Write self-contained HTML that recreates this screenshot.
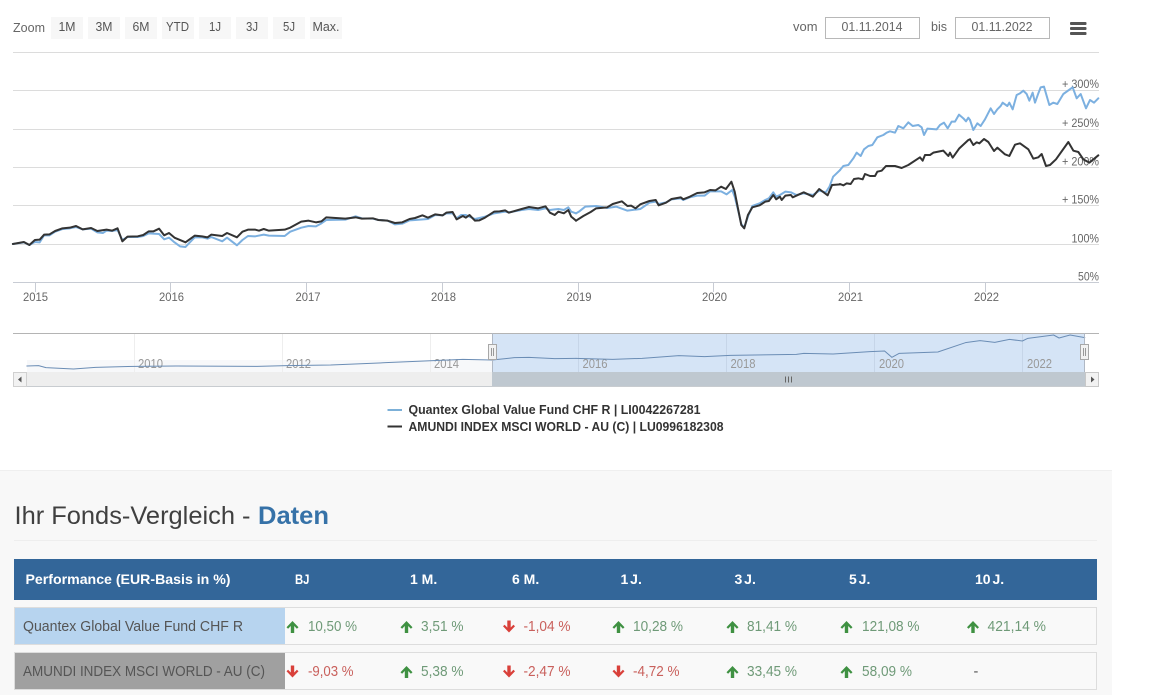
<!DOCTYPE html>
<html lang="de"><head><meta charset="utf-8"><title>Fonds-Vergleich</title>
<style>
html,body{margin:0;padding:0;background:#fff;width:1152px;height:695px;overflow:hidden}
svg{display:block;position:absolute;left:0;top:0}
text{font-family:"Liberation Sans",sans-serif}
.btn{font-size:12.5px;fill:#555}
.ax{font-size:11.5px;fill:#666}
.nv{font-size:12.5px;fill:#999}
.hd{font-size:14px;font-weight:bold;fill:#fff}
.hs{font-size:14px;font-weight:bold;fill:#fff;word-spacing:-2px}
.g{font-size:14.5px;fill:#6f9a78}
.r{font-size:14.5px;fill:#c9605c}
.n{font-size:14.5px;fill:#555}
.l{fill:none;stroke-linejoin:round;stroke-linecap:round;vector-effect:non-scaling-stroke}
</style></head><body>
<svg width="1152" height="695" viewBox="0 0 1152 695" xmlns="http://www.w3.org/2000/svg">
<defs>
<path id="up" d="M6 0L12 6.2 10.4 7.7 7.7 5V12H4.3V5L1.6 7.7 0 6.2Z" fill="#3f9142"/>
<path id="dn" d="M6 12L12 5.8 10.400 4.300 7.700 7V0H4.300V7L1.600 4.300 0 5.800Z" fill="#d9403a"/>
</defs>
<rect width="1152" height="695" fill="#fff"/>

<!-- toolbar -->
<text x="13" y="32" class="btn" textLength="32" lengthAdjust="spacingAndGlyphs" style="fill:#666">Zoom</text>
<g fill="#f7f7f7">
<rect x="51" y="17" width="32" height="22"/><rect x="88" y="17" width="32" height="22"/><rect x="125" y="17" width="32" height="22"/><rect x="162" y="17" width="32" height="22"/><rect x="199" y="17" width="32" height="22"/><rect x="236" y="17" width="32" height="22"/><rect x="273" y="17" width="32" height="22"/><rect x="310" y="17" width="32" height="22"/>
</g>
<text x="58.500" y="31" class="btn" textLength="17" lengthAdjust="spacingAndGlyphs">1M</text>
<text x="95.500" y="31" class="btn" textLength="17" lengthAdjust="spacingAndGlyphs">3M</text>
<text x="132.500" y="31" class="btn" textLength="17" lengthAdjust="spacingAndGlyphs">6M</text>
<text x="166" y="31" class="btn" textLength="23" lengthAdjust="spacingAndGlyphs">YTD</text>
<text x="209" y="31" class="btn" textLength="12" lengthAdjust="spacingAndGlyphs">1J</text>
<text x="246" y="31" class="btn" textLength="12" lengthAdjust="spacingAndGlyphs">3J</text>
<text x="283" y="31" class="btn" textLength="12" lengthAdjust="spacingAndGlyphs">5J</text>
<text x="312.500" y="31" class="btn" textLength="27" lengthAdjust="spacingAndGlyphs">Max.</text>

<text x="793" y="31" class="btn" textLength="24.500" lengthAdjust="spacingAndGlyphs" style="fill:#666">vom</text>
<rect x="825.500" y="17.500" width="94" height="21" fill="#fff" stroke="#b8b8b8"/>
<text x="841.500" y="31" class="btn" textLength="61" lengthAdjust="spacingAndGlyphs" style="fill:#666">01.11.2014</text>
<text x="931" y="31" class="btn" textLength="16" lengthAdjust="spacingAndGlyphs" style="fill:#666">bis</text>
<rect x="955.500" y="17.500" width="94" height="21" fill="#fff" stroke="#b8b8b8"/>
<text x="971.500" y="31" class="btn" textLength="61" lengthAdjust="spacingAndGlyphs" style="fill:#666">01.11.2022</text>
<g fill="#555"><rect x="1070" y="22" width="16.500" height="3" rx="1"/><rect x="1070" y="27" width="16.500" height="3" rx="1"/><rect x="1070" y="32" width="16.500" height="3" rx="1"/></g>

<!-- grid -->
<path d="M13 52.500H1099M13 90.500H1099M13 129.500H1099M13 167.500H1099M13 205.500H1099M13 244.500H1099" stroke="#dcdcdc"/>
<path d="M13 282.500H1099" stroke="#c8ccd4"/>
<path d="M35.500 282V292M170.500 282V292M306.500 282V292M442.500 282V292M578.500 282V292M713.500 282V292M849.500 282V292M985.500 282V292" stroke="#c8ccd4"/>

<text x="1062" y="88" class="ax" textLength="37" lengthAdjust="spacingAndGlyphs">+ 300%</text>
<text x="1062" y="127" class="ax" textLength="37" lengthAdjust="spacingAndGlyphs">+ 250%</text>
<text x="1062" y="165.500" class="ax" textLength="37" lengthAdjust="spacingAndGlyphs">+ 200%</text>
<text x="1062" y="203.500" class="ax" textLength="37" lengthAdjust="spacingAndGlyphs">+ 150%</text>
<text x="1071.500" y="242.500" class="ax" textLength="27.500" lengthAdjust="spacingAndGlyphs">100%</text>
<text x="1078" y="280.500" class="ax" textLength="21" lengthAdjust="spacingAndGlyphs">50%</text>

<text x="23" y="301" class="ax" textLength="25" lengthAdjust="spacingAndGlyphs">2015</text>
<text x="159" y="301" class="ax" textLength="25" lengthAdjust="spacingAndGlyphs">2016</text>
<text x="295.500" y="301" class="ax" textLength="25" lengthAdjust="spacingAndGlyphs">2017</text>
<text x="431" y="301" class="ax" textLength="25" lengthAdjust="spacingAndGlyphs">2018</text>
<text x="566.500" y="301" class="ax" textLength="25" lengthAdjust="spacingAndGlyphs">2019</text>
<text x="702" y="301" class="ax" textLength="25" lengthAdjust="spacingAndGlyphs">2020</text>
<text x="838" y="301" class="ax" textLength="25" lengthAdjust="spacingAndGlyphs">2021</text>
<text x="974" y="301" class="ax" textLength="25" lengthAdjust="spacingAndGlyphs">2022</text>

<!-- blue series -->
<g transform="scale(.36735,.33333)">
<polyline class="l" stroke="#7cb0e0" stroke-width="2" points="35,732 65,727 80,735 95,726 108,727 120,706 135,706 150,695 170,687 190,685 207,681 225,688 248,686 265,697 280,699 290,692 305,693 320,690 333,720 347,711 375,711 390,708 405,700 433,702 447,718 460,713 475,727 490,739 505,741 530,712 550,712 565,716 575,711 605,724 618,713 645,736 660,720 675,708 695,709 718,704 732,707 775,708 790,695 820,683 840,678 860,679 875,670 888,660 940,659 968,649 985,655 1015,656 1030,660 1055,662 1075,673 1095,671 1115,661 1130,660 1165,657 1185,645 1205,646 1215,640 1232,640 1243,655 1255,645 1268,645 1278,650 1293,657 1320,650 1345,640 1375,635 1385,637 1420,630 1440,627 1465,630 1485,625 1497,630 1510,628 1520,627 1535,630 1547,622 1555,635 1568,640"/>
</g>
<g transform="translate(576,0) scale(.36735,.33333)">
<polyline class="l" stroke="#7cb0e0" stroke-width="2" points="0,640 8,635 25,620 55,618 85,624 110,620 140,632 175,627 200,608 217,605 225,612 245,607 260,598 285,595 292,600 310,592 330,587 350,587 365,574 395,574 410,583 425,570 432,590 440,625 450,672 458,683 468,650 480,618 500,610 515,600 525,595 537,577 545,590 555,585 570,575 585,577 600,585 620,580 645,585 662,572 680,577 690,560 700,530 719,510"/>
</g>
<g transform="translate(840,80) scale(.33333)">
<polyline class="l" stroke="#7cb0e0" stroke-width="2" points="0,270 10,258 25,255 40,235 50,218 62,228 72,208 85,198 97,195 112,172 130,165 140,158 150,154 165,158 175,138 190,145 205,127 218,138 235,135 245,142 252,165 262,146 290,148 300,135 312,128 323,145 335,125 345,125 357,104 370,115 378,124 385,113 390,120"/>
</g>
<g transform="translate(970,80) scale(.33333)">
<polyline class="l" stroke="#7cb0e0" stroke-width="2" points="0,120 10,150 22,130 32,138 45,118 62,85 72,102 82,88 92,78 98,68 112,78 118,68 128,88 140,45 150,40 160,32 170,42 178,62 188,38 195,68 205,40 212,22 222,20 238,75 250,68 262,72 280,42 308,22 320,55 332,42 348,85 360,60 372,68 385,55"/>
</g>
<!-- dark series -->
<g transform="scale(.36735,.33333)">
<polyline class="l" stroke="#333" stroke-width="2" points="35,732 65,726 80,735 95,720 108,719 120,704 135,703 150,693 170,685 190,683 207,678 225,688 248,684 265,693 290,689 305,692 320,685 333,724 347,710 375,709 390,705 405,694 418,694 433,686 447,706 460,699 475,713 505,727 530,707 550,709 565,712 575,704 605,708 618,699 645,712 660,695 675,689 695,689 705,692 718,687 732,692 775,689 790,683 820,665 840,662 860,667 875,664 888,652 940,656 968,652 985,656 1015,655 1030,660 1055,662 1075,669 1095,667 1115,657 1130,654 1150,646 1165,653 1185,643 1205,646 1215,638 1232,636 1243,658 1260,648 1268,653 1278,645 1293,662 1305,661 1320,653 1345,635 1360,634 1375,631 1385,638 1420,627 1440,621 1465,625 1485,619 1497,638 1510,645 1520,635 1535,640 1547,630 1555,650 1568,662"/>
</g>
<g transform="translate(576,0) scale(.36735,.33333)">
<polyline class="l" stroke="#333" stroke-width="2" points="0,662 20,648 40,636 55,625 85,622 100,612 125,604 140,618 150,617 162,625 175,613 200,603 217,600 225,616 245,608 260,597 285,592 292,598 310,590 330,579 350,577 365,570 380,571 395,560 408,567 423,545 432,575 440,620 450,675 458,685 468,645 480,622 500,616 515,605 525,603 537,585 545,598 555,590 560,600 570,587 585,585 590,592 620,577 645,590 662,567 685,586 697,555 719,553"/>
</g>
<g transform="translate(840,80) scale(.33333)">
<polyline class="l" stroke="#333" stroke-width="2" points="0,312 10,316 20,310 32,312 42,297 55,295 68,298 75,282 90,288 105,288 112,275 125,272 138,258 165,258 185,264 205,255 240,232 248,242 255,225 270,225 280,218 310,212 325,228 330,218 338,233 358,205 385,180 390,178"/>
</g>
<g transform="translate(970,80) scale(.33333)">
<polyline class="l" stroke="#333" stroke-width="2" points="0,178 10,195 20,187 28,190 42,177 55,186 72,213 82,203 105,223 118,228 135,194 150,190 175,208 190,236 205,232 215,222 228,258 240,255 258,238 295,186 310,212 325,216 340,238 358,248 385,226"/>
</g>

<!-- navigator -->
<rect x="27" y="372" width="465" height="14" fill="#eeeeee"/>
<rect x="492" y="333" width="593" height="39" fill="#d5e4f6"/>
<rect x="27" y="360" width="465" height="12" fill="#f7f8fa"/>
<path d="M134.500 333V372M282.500 333V372M430.500 333V372" stroke="#eeeeee"/>
<path d="M578.500 333V372M726.500 333V372M874.500 333V372M1022.500 333V372" stroke="#c6d5e8"/>
<text x="138" y="368" class="nv" textLength="25" lengthAdjust="spacingAndGlyphs">2010</text>
<text x="286" y="368" class="nv" textLength="25" lengthAdjust="spacingAndGlyphs">2012</text>
<text x="434" y="368" class="nv" textLength="25" lengthAdjust="spacingAndGlyphs">2014</text>
<text x="582.500" y="368" class="nv" textLength="25" lengthAdjust="spacingAndGlyphs">2016</text>
<text x="730.500" y="368" class="nv" textLength="25" lengthAdjust="spacingAndGlyphs">2018</text>
<text x="879" y="368" class="nv" textLength="25" lengthAdjust="spacingAndGlyphs">2020</text>
<text x="1027" y="368" class="nv" textLength="25" lengthAdjust="spacingAndGlyphs">2022</text>
<g transform="translate(0,320) scale(.36735,.33333)">
<polyline class="l" stroke="#6b8db5" stroke-width="1" points="73,138 105,137 125,143 200,147 260,142 370,139 480,138 700,139 780,137 900,135 1050,128 1260,118 1340,120 1400,113 1440,112 1510,116 1568,115"/>
</g>
<g transform="translate(576,320) scale(.36735,.33333)">
<polyline class="l" stroke="#6b8db5" stroke-width="1" points="0,115 100,118 180,115 280,107 350,110 420,106 600,103 620,100 700,102 800,95 840,93 860,112 880,100 985,96 1060,68 1100,62 1140,67 1180,58 1215,63 1230,55 1300,45 1315,54 1345,45 1385,53"/>
</g>
<path d="M13 333.500H1099" stroke="#b4b4b4"/>
<path d="M492.500 333V386M1084.500 333V386" stroke="#b0b8c4"/>
<rect x="492" y="372" width="593" height="14" fill="#bfc8d0"/>
<path d="M13 386.500H1099" stroke="#c8ccd0"/>
<rect x="13.500" y="372.500" width="13" height="14" fill="#f2f2f2" stroke="#d0d0d0"/>
<path d="M21.500 376.500L18 379.500 21.500 382.500Z" fill="#555"/>
<rect x="1085.500" y="372.500" width="13" height="14" fill="#f2f2f2" stroke="#c8c8c8"/>
<path d="M1091 376.500L1094.500 379.500 1091 382.500Z" fill="#555"/>
<path d="M785.500 376.500V382.500M788.500 376.500V382.500M791.500 376.500V382.500" stroke="#666"/>
<rect x="488.500" y="344.500" width="8" height="15" fill="#f2f2f2" stroke="#a8a8a8"/>
<path d="M491.500 348V356M493.500 348V356" stroke="#999"/>
<rect x="1080.500" y="344.500" width="8" height="15" fill="#f2f2f2" stroke="#a8a8a8"/>
<path d="M1083.500 348V356M1085.500 348V356" stroke="#999"/>

<!-- legend -->
<path d="M387.500 410H402" stroke="#7cb0d8" stroke-width="2"/>
<path d="M387.500 426.500H402" stroke="#333" stroke-width="2"/>
<text x="408.500" y="414" font-size="12.500" font-weight="bold" fill="#333" textLength="292" lengthAdjust="spacingAndGlyphs">Quantex Global Value Fund CHF R | LI0042267281</text>
<text x="408.500" y="431" font-size="12.500" font-weight="bold" fill="#333" textLength="315" lengthAdjust="spacingAndGlyphs">AMUNDI INDEX MSCI WORLD - AU (C) | LU0996182308</text>

<!-- data section -->
<rect x="0" y="470" width="1112" height="225" fill="#f8f8f8"/>
<path d="M0 470.500H1112" stroke="#efefef"/>
<text x="14.500" y="524" font-size="25" fill="#404040" textLength="236" lengthAdjust="spacingAndGlyphs">Ihr Fonds-Vergleich -</text>
<text x="258" y="524" font-size="25" font-weight="bold" fill="#3672a8" textLength="71" lengthAdjust="spacingAndGlyphs">Daten</text>
<path d="M14 540.500H1097" stroke="#eeeeee"/>
<rect x="14" y="559" width="1083" height="41" fill="#336699"/>
<text x="25.500" y="584" class="hd" textLength="205" lengthAdjust="spacingAndGlyphs">Performance (EUR-Basis in %)</text>
<text x="295" y="584" class="hd" textLength="14.500" lengthAdjust="spacingAndGlyphs">BJ</text>
<text x="410" y="584" class="hd">1 M.</text>
<text x="512" y="584" class="hd">6 M.</text>
<text x="620.500" y="584" class="hs">1 J.</text>
<text x="734.500" y="584" class="hs">3 J.</text>
<text x="849" y="584" class="hs">5 J.</text>
<text x="975" y="584" class="hs">10 J.</text>

<rect x="14.500" y="607.500" width="1082" height="37" fill="#f9f9f9" stroke="#dddddd"/>
<rect x="15" y="608" width="270" height="36" fill="#b7d4ef"/>
<rect x="14.500" y="652.500" width="1082" height="37" fill="#f9f9f9" stroke="#dddddd"/>
<rect x="15" y="653" width="270" height="36" fill="#a0a0a0"/>
<text x="23" y="631" class="n" textLength="220" lengthAdjust="spacingAndGlyphs">Quantex Global Value Fund CHF R</text>
<text x="23" y="676" class="n" textLength="242" lengthAdjust="spacingAndGlyphs">AMUNDI INDEX MSCI WORLD - AU (C)</text>

<use href="#up" x="286.500" y="621"/><text x="308" y="631" class="g" textLength="49" lengthAdjust="spacingAndGlyphs">10,50 %</text>
<use href="#up" x="400.500" y="621"/><text x="421" y="631" class="g" textLength="42.500" lengthAdjust="spacingAndGlyphs">3,51 %</text>
<use href="#dn" x="503" y="620.500"/><text x="523.500" y="631" class="r" textLength="47" lengthAdjust="spacingAndGlyphs">-1,04 %</text>
<use href="#up" x="612.500" y="621"/><text x="633" y="631" class="g" textLength="50" lengthAdjust="spacingAndGlyphs">10,28 %</text>
<use href="#up" x="726.500" y="621"/><text x="747" y="631" class="g" textLength="50" lengthAdjust="spacingAndGlyphs">81,41 %</text>
<use href="#up" x="840.500" y="621"/><text x="862" y="631" class="g" textLength="57.500" lengthAdjust="spacingAndGlyphs">121,08 %</text>
<use href="#up" x="967" y="621"/><text x="987.500" y="631" class="g" textLength="58.500" lengthAdjust="spacingAndGlyphs">421,14 %</text>

<use href="#dn" x="286.500" y="665.500"/><text x="308" y="676" class="r" textLength="45.500" lengthAdjust="spacingAndGlyphs">-9,03 %</text>
<use href="#up" x="400.500" y="666"/><text x="421" y="676" class="g" textLength="42.500" lengthAdjust="spacingAndGlyphs">5,38 %</text>
<use href="#dn" x="503" y="665.500"/><text x="523.500" y="676" class="r" textLength="47" lengthAdjust="spacingAndGlyphs">-2,47 %</text>
<use href="#dn" x="612.500" y="665.500"/><text x="633" y="676" class="r" textLength="46.500" lengthAdjust="spacingAndGlyphs">-4,72 %</text>
<use href="#up" x="726.500" y="666"/><text x="747" y="676" class="g" textLength="50" lengthAdjust="spacingAndGlyphs">33,45 %</text>
<use href="#up" x="840.500" y="666"/><text x="862" y="676" class="g" textLength="50" lengthAdjust="spacingAndGlyphs">58,09 %</text>
<text x="973.500" y="676" class="n">-</text>
</svg>
</body></html>
